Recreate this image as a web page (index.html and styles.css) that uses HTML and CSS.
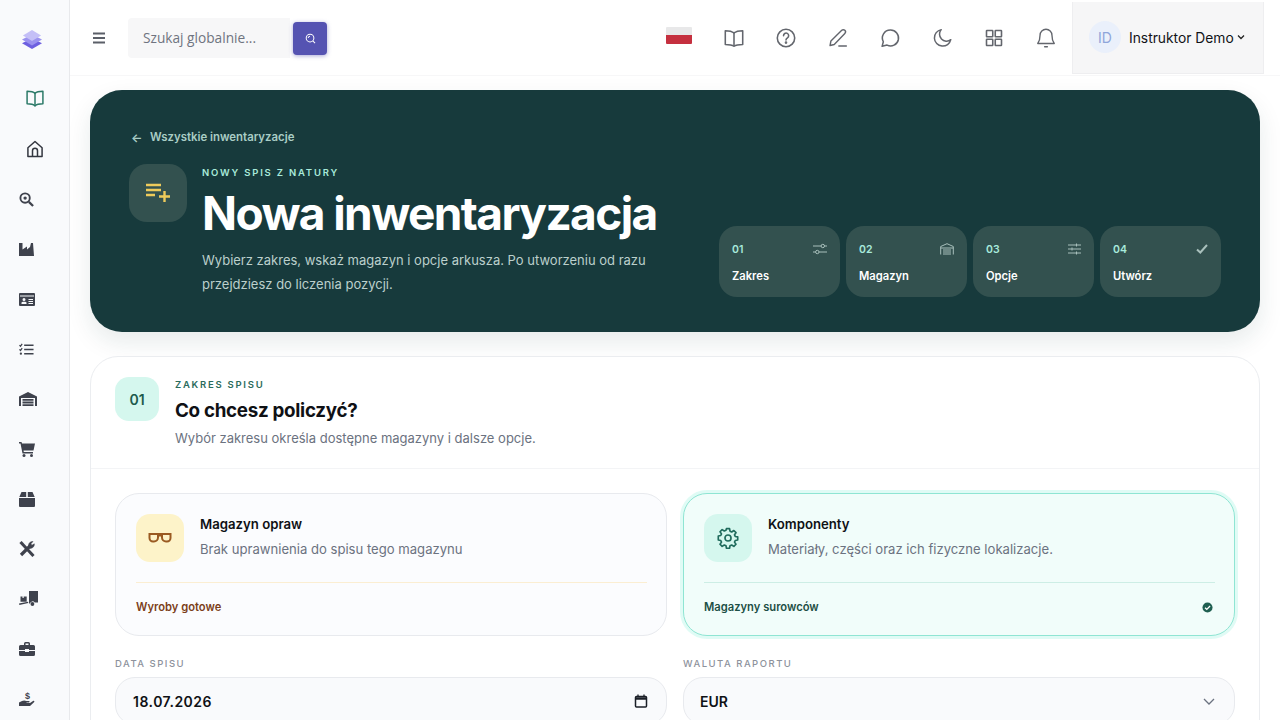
FILE: index.html
```html
<!DOCTYPE html>
<html lang="pl">
<head>
    <meta charset="UTF-8">
    <meta name="viewport" content="width=device-width, initial-scale=1.0">
    <title>Nowa inwentaryzacja</title>
    <link rel="stylesheet" href="styles.css">
</head>
<body>

<div class="app">
    <!-- Sidebar -->
    <aside class="sidebar">
        <div class="logo">
            <svg width="22" height="20" viewBox="0 0 24 22">
                <path d="M12 9 L23 14.5 L12 21 L1 14.5 Z" fill="#6d5fe0"/>
                <path d="M12 5 L23 10.5 L12 17 L1 10.5 Z" fill="#9b92ef"/>
                <path d="M12 0 L22 6 L12 12 L2 6 Z" fill="#c4bff7"/>
            </svg>
        </div>
        <div class="side-item line active">
            <svg width="20" height="20" viewBox="0 0 24 24" fill="none" stroke="currentColor" stroke-width="1.8" stroke-linejoin="round"><path d="M12 6.5C10 4.5 6 4 2.5 4v15c3.5 0 7.500.5 9.500 2.500 2-2 6-2.500 9.500-2.500V4C18 4 14 4.500 12 6.500z"/><path d="M12 6.500v15"/></svg>
        </div>
        <div class="side-item line">
            <svg width="20" height="20" viewBox="0 0 24 24" fill="none" stroke="currentColor" stroke-width="1.8" stroke-linejoin="round"><path d="M3.500 10.500 12 3l8.500 7.500V21h-17z"/><path d="M9 21v-7a3 3 0 0 1 6 0v7"/></svg>
        </div>
        <div class="side-item">
            <svg width="15" height="15" viewBox="0 0 16 16" fill="none" stroke="currentColor"><circle cx="6.500" cy="6.500" r="5" stroke-width="2"/><circle cx="6.500" cy="6.500" r="1.800" fill="currentColor" stroke="none"/><path d="M10.500 10.500 15 15" stroke-width="2.400"/></svg>
        </div>
        <div class="side-item">
            <svg width="15" height="13" viewBox="0 0 15 13" fill="currentColor"><path d="M0 0h3.500v6.500L8 3.500v3l3-2.500 1-4h2l1 13H0z"/></svg>
        </div>
        <div class="side-item">
            <svg width="16" height="13" viewBox="0 0 16 13" fill="currentColor"><path fill-rule="evenodd" d="M1 0h14a1 1 0 0 1 1 1v11a1 1 0 0 1-1 1H1a1 1 0 0 1-1-1V1a1 1 0 0 1 1-1zM1 2.500v1h14v-1zM5 5a1.500 1.500 0 1 0 0 3 1.500 1.500 0 0 0 0-3zM2.500 11h5V9.800C7.500 9 6.500 8.700 5 8.700s-2.500.3-2.500 1.100zM9.500 6v1H14V6zm0 2v1H14V8zm0 2v1H14v-1z"/></svg>
        </div>
        <div class="side-item">
            <svg width="15" height="13" viewBox="0 0 16 13" fill="none" stroke="currentColor" stroke-width="1.300"><path d="M.5 1.800 1.600 3 3.400.6M.5 6.300 1.600 7.500 3.400 5.100"/><path d="M5.500 2h10M5.500 6.500h10M5.500 11h10" stroke-width="1.500"/><circle cx="2" cy="11" r="1.200" fill="currentColor" stroke="none"/></svg>
        </div>
        <div class="side-item">
            <svg width="18" height="14" viewBox="0 0 18 14" fill="currentColor"><path fill-rule="evenodd" d="M0 4.500 9 0l9 4.500V14h-2V6H2v8H0zM3.500 7h11v1.800h-11zm0 2.600h11v1.800h-11zm0 2.600h11V14h-11z"/></svg>
        </div>
        <div class="side-item">
            <svg width="16" height="15" viewBox="0 0 16 15" fill="currentColor"><path d="M0 0h2.500l.5 1.500H16l-1.500 7H4.500l.3 1.500H14v1.500H3.500L1.500 1.500H0z"/><circle cx="5" cy="13.500" r="1.500"/><circle cx="12.500" cy="13.500" r="1.500"/></svg>
        </div>
        <div class="side-item">
            <svg width="16" height="15" viewBox="0 0 16 15" fill="currentColor"><path d="M2.500 0h4.700v5H0.300zM8.800 0h4.700l2.200 5H8.800zM0 6h16v8a1 1 0 0 1-1 1H1a1 1 0 0 1-1-1z"/></svg>
        </div>
        <div class="side-item">
            <svg width="16" height="16" viewBox="0 0 16 16" fill="none" stroke="currentColor"><path d="M1.500 1 14.500 15" stroke-width="3"/><path d="M2 14 11 5" stroke-width="3.200"/><path d="M9.500 4.500A4 4 0 0 1 14 .5l-2 2.200.8 1.600 2.500-1.500a4 4 0 0 1-4.800 4.500z" fill="currentColor" stroke="currentColor" stroke-width=".5"/></svg>
        </div>
        <div class="side-item">
            <svg width="19" height="16" viewBox="0 0 19 16" fill="currentColor"><path d="M10 0h9v11.500h-3.300a2.600 2.600 0 0 0-4.700 1L10 12.500z"/><path d="M1.500 5.500h2v1.500h1.200V5.500h3v5.200h-6.200z"/><path d="M0 12.500 9 10.700l.3 1.400L.4 14z"/><circle cx="13.400" cy="13" r="1.900"/></svg>
        </div>
        <div class="side-item">
            <svg width="16" height="14" viewBox="0 0 16 14" fill="currentColor"><path fill-rule="evenodd" d="M5 3V1.500A1.500 1.500 0 0 1 6.500 0h3A1.500 1.500 0 0 1 11 1.500V3h3.500A1.500 1.500 0 0 1 16 4.500V8H10V7H6v1H0V4.500A1.500 1.500 0 0 1 1.500 3zM6.500 1.500V3h3V1.500zM0 9h6v1h4V9h6v3.500a1.500 1.500 0 0 1-1.500 1.500h-13A1.500 1.500 0 0 1 0 12.500z"/></svg>
        </div>
        <div class="side-item">
            <svg width="16" height="16" viewBox="0 0 16 16" fill="currentColor"><path d="M0 11.500 3 10c1.500-.8 3-.6 4.500 0H10c.8 0 .8 1.500 0 1.500H7.500v.5H11l3-2c1-.6 2 .5 1 1.300L11 15H0z"/><text x="6" y="8" font-size="9" font-family="Liberation Sans" font-weight="700">$</text></svg>
        </div>
    </aside>

    <div class="content">
        <!-- Top bar -->
        <header class="topbar">
            <button class="menu-btn" aria-label="Menu">
                <svg width="14" height="12" viewBox="0 0 14 12" fill="none" stroke="#5b5f68" stroke-width="1.800"><path d="M1 1.500h12M1 6h12M1 10.500h12"/></svg>
            </button>
            <div class="search">
                <span class="search-text">Szukaj globalnie...</span>
                <button class="search-btn" aria-label="Szukaj">
                    <svg width="11" height="11" viewBox="0 0 12 12" fill="none" stroke="#fff" stroke-width="1.100"><circle cx="5.500" cy="5.500" r="4.200"/><path d="M3.500 5.500a2 2 0 0 1 2-2M8.500 8.500 11 11"/></svg>
                </button>
            </div>
            <div class="top-icons">
                <div class="flag"></div>
                <div class="top-icon">
                    <svg width="22" height="22" viewBox="0 0 24 24" fill="none" stroke="currentColor" stroke-width="1.700" stroke-linejoin="round"><path d="M12 6.500C10 4.800 6.500 4 2.500 4v15c4 0 7.500.5 9.500 2 2-1.500 5.500-2 9.500-2V4c-4 0-7.500.8-9.500 2.500z"/><path d="M12 6.500V21"/></svg>
                </div>
                <div class="top-icon">
                    <svg width="22" height="22" viewBox="0 0 24 24" fill="none" stroke="currentColor" stroke-width="1.700" stroke-linecap="round"><circle cx="12" cy="12" r="9.500"/><path d="M9.300 9.500a2.800 2.800 0 1 1 4.300 2.300c-1 .7-1.600 1.200-1.600 2.400"/><circle cx="12" cy="17" r=".6" fill="currentColor"/></svg>
                </div>
                <div class="top-icon">
                    <svg width="20" height="20" viewBox="0 0 24 24" fill="none" stroke="currentColor" stroke-width="1.700" stroke-linecap="round" stroke-linejoin="round"><path d="M2.500 21l1-5.500L16.500 2.800a2.600 2.600 0 0 1 3.700 3.700L7.500 19.800z"/><path d="M13 21.500h9"/></svg>
                </div>
                <div class="top-icon">
                    <svg width="20" height="20" viewBox="0 0 24 24" fill="none" stroke="currentColor" stroke-width="1.800" stroke-linejoin="round"><path d="M12.500 2.500a9.500 9.500 0 1 1-4 18L2.500 22l1.500-5.500a9.500 9.500 0 0 1 8.500-14z"/></svg>
                </div>
                <div class="top-icon">
                    <svg width="21" height="21" viewBox="0 0 24 24" fill="none" stroke="currentColor" stroke-width="1.700" stroke-linejoin="round"><path d="M10.500 3a9.500 9.500 0 1 0 11 11.500A8 8 0 0 1 10.500 3z"/></svg>
                </div>
                <div class="top-icon">
                    <svg width="20" height="20" viewBox="0 0 24 24" fill="none" stroke="currentColor" stroke-width="1.900"><rect x="3" y="3" width="7.500" height="7.500" rx=".5"/><rect x="13.500" y="3" width="7.500" height="7.500" rx=".5"/><rect x="3" y="13.500" width="7.500" height="7.500" rx=".5"/><rect x="13.500" y="13.500" width="7.500" height="7.500" rx=".5"/></svg>
                </div>
                <div class="top-icon">
                    <svg width="22" height="22" viewBox="0 0 24 24" fill="none" stroke="currentColor" stroke-width="1.500" stroke-linecap="round" stroke-linejoin="round"><path d="M12 2.500a6.500 6.500 0 0 0-6.500 6.500c0 5-1 7-2.500 9h18c-1.500-2-2.500-4-2.500-9A6.500 6.500 0 0 0 12 2.500z"/><path d="M10.500 21.500h3"/></svg>
                </div>
            </div>
            <div class="user-box">
                <div class="avatar">ID</div>
                <span class="user-name">Instruktor Demo</span>
                <svg class="user-caret" width="8" height="6" viewBox="0 0 8 6" fill="none" stroke="#222" stroke-width="1.300"><path d="M1 1.500 4 4.500 7 1.500"/></svg>
            </div>
        </header>

        <main class="main">
            <!-- Hero -->
            <section class="hero">
                <div class="hero-left">
                    <a class="back-link"><span class="back-arrow">←</span>Wszystkie inwentaryzacje</a>
                    <div class="hero-title-row">
                        <div class="hero-icon">
                            <svg width="26" height="20" viewBox="0 0 26 20" fill="none" stroke="#eecb5b" stroke-width="2.400"><path d="M1 2h15M1 7h15M1 12h9M14 13.500h11M19.500 8v11"/></svg>
                        </div>
                        <div class="hero-text">
                            <div class="eyebrow">NOWY SPIS Z NATURY</div>
                            <h1>Nowa inwentaryzacja</h1>
                            <p>Wybierz zakres, wskaż magazyn i opcje arkusza. Po utworzeniu od razu przejdziesz do liczenia pozycji.</p>
                        </div>
                    </div>
                </div>
                <div class="steps">
                    <div class="step">
                        <div class="step-top"><span class="step-num">01</span>
                            <svg width="14" height="12" viewBox="0 0 14 12" fill="none" stroke="#a9c0bc" stroke-width="1"><path d="M0 3h8M11.500 3H14M0 9h2.500M6 9h8"/><circle cx="9.800" cy="3" r="1.700"/><circle cx="4.300" cy="9" r="1.700"/></svg>
                        </div>
                        <div class="step-name">Zakres</div>
                    </div>
                    <div class="step">
                        <div class="step-top"><span class="step-num">02</span>
                            <svg width="14" height="12" viewBox="0 0 14 12" fill="none" stroke="#a9c0bc" stroke-width="1"><path d="M.7 11.500V3.500L7 .7l6.300 2.800v8M.7 5h12.600M3 7h8M3 9h8M3 11h8" /></svg>
                        </div>
                        <div class="step-name">Magazyn</div>
                    </div>
                    <div class="step">
                        <div class="step-top"><span class="step-num">03</span>
                            <svg width="13" height="12" viewBox="0 0 13 12" fill="none" stroke="#a9c0bc" stroke-width="1"><path d="M0 2h13M0 6h13M0 10h13"/><path d="M8.500.5v3M4 4.500v3M8.500 8.500v3"/></svg>
                        </div>
                        <div class="step-name">Opcje</div>
                    </div>
                    <div class="step">
                        <div class="step-top"><span class="step-num">04</span>
                            <svg width="12" height="10" viewBox="0 0 12 10" fill="none" stroke="#a9c0bc" stroke-width="2"><path d="M1 5.500 4.300 8.500 11 1"/></svg>
                        </div>
                        <div class="step-name">Utwórz</div>
                    </div>
                </div>
            </section>

            <!-- Scope card -->
            <section class="card">
                <div class="card-head">
                    <div class="card-num">01</div>
                    <div>
                        <div class="card-eyebrow">ZAKRES SPISU</div>
                        <h2>Co chcesz policzyć?</h2>
                        <p>Wybór zakresu określa dostępne magazyny i dalsze opcje.</p>
                    </div>
                </div>
                <div class="card-body">
                    <div class="option">
                        <div class="option-top">
                            <div class="option-icon amber">
                                <svg width="24" height="12" viewBox="0 0 24 12" fill="none" stroke="#9a5a22" stroke-width="2"><path d="M1 2h22M1.500 2h8.500v3.500a4 4 0 0 1-4 4H5a3.500 3.500 0 0 1-3.500-3.500zM14 2h8.500v4A3.500 3.500 0 0 1 19 9.500h-1a4 4 0 0 1-4-4zM10 3.500h4"/></svg>
                            </div>
                            <div>
                                <h3>Magazyn opraw</h3>
                                <p>Brak uprawnienia do spisu tego magazynu</p>
                            </div>
                        </div>
                        <div class="option-foot amber-foot"><span>Wyroby gotowe</span></div>
                    </div>
                    <div class="option selected">
                        <div class="option-top">
                            <div class="option-icon mint">
                                <svg width="22" height="22" viewBox="0 0 24 24" fill="none" stroke="#1f6b5c" stroke-width="1.800" stroke-linejoin="round"><path d="M10.300 2.500h3.400l.5 2.800 1.800.8 2.400-1.600 2.300 2.400-1.600 2.300.8 1.800 2.700.5v3.400l-2.700.5-.8 1.800 1.600 2.300-2.300 2.400-2.400-1.600-1.800.8-.5 2.800h-3.400l-.5-2.800-1.800-.8-2.400 1.600-2.300-2.400 1.600-2.300-.8-1.800-2.700-.5V10.500l2.700-.5.8-1.800L3.300 5.900l2.300-2.400 2.400 1.600 1.800-.8z" transform="translate(0 -.7)"/><circle cx="12" cy="12" r="3.300"/></svg>
                            </div>
                            <div>
                                <h3>Komponenty</h3>
                                <p>Materiały, części oraz ich fizyczne lokalizacje.</p>
                            </div>
                        </div>
                        <div class="option-foot mint-foot"><span>Magazyny surowców</span>
                            <svg width="11" height="11" viewBox="0 0 12 12"><circle cx="6" cy="6" r="5.500" fill="#1f5f50"/><path d="M3.300 6.200 5.200 8 8.800 4.300" fill="none" stroke="#fff" stroke-width="1.400"/></svg>
                        </div>
                    </div>
                    <div class="field">
                        <label>DATA SPISU</label>
                        <div class="field-box date-box">
                            <span>18.07.2026</span>
                            <svg width="14" height="14" viewBox="0 0 14 14" fill="none" stroke="#1b1f27" stroke-width="1.500"><rect x="1.500" y="2.500" width="11" height="10.500" rx="1"/><path d="M1.500 4.500h11" stroke-width="2.500"/><path d="M4 .5v2M10 .5v2" stroke-width="1.300"/></svg>
                        </div>
                    </div>
                    <div class="field">
                        <label>WALUTA RAPORTU</label>
                        <div class="field-box">
                            <span>EUR</span>
                            <svg width="12" height="7" viewBox="0 0 12 7" fill="none" stroke="#6b7280" stroke-width="1.300"><path d="M1 1l5 5 5-5"/></svg>
                        </div>
                    </div>
                </div>
            </section>
        </main>
    </div>
</div>

</body>
</html>
```

FILE: styles.css
```css
* {
    box-sizing: border-box;
}

html, body {
    height: 720px;
    overflow: hidden;
}

body {
    margin: 0;
    font-family: "Inter", "Liberation Sans", sans-serif;
    background-color: #ffffff;
    color: #0f1115;
}

h1, h2, h3, p {
    margin: 0;
}

.app {
    display: flex;
    height: 720px;
}

/* Sidebar */
.sidebar {
    width: 70px;
    flex-shrink: 0;
    background-color: #f9fafc;
    border-right: 1px solid #e8e9ec;
    padding-top: 30px;
}

.logo {
    height: 43px;
    padding-left: 21px;
}

.side-item {
    height: 50px;
    display: flex;
    align-items: center;
    padding-left: 19px;
    color: #3f424d;
}

.side-item.line {
    padding-left: 25px;
    color: #33363f;
}

.side-item.active {
    color: #2c7a68;
    margin-bottom: 1px;
}

/* Top bar */
.content {
    flex: 1;
    min-width: 0;
}

.topbar {
    height: 76px;
    display: flex;
    align-items: center;
    padding-left: 22px;
    border-bottom: 1px solid #f7f7f8;
}

.menu-btn {
    background: none;
    border: none;
    padding: 0;
    width: 14px;
    height: 12px;
    display: flex;
}

.search {
    display: flex;
    align-items: center;
    margin-left: 22px;
    width: 199px;
    height: 40px;
}

.search-text {
    width: 162px;
    height: 40px;
    line-height: 40px;
    padding-left: 15px;
    background-color: #f7f7f8;
    border-radius: 4px 0 0 4px;
    color: #6f7480;
    font-family: "Open Sans", sans-serif;
    font-size: 13.700px;
}

.search-btn {
    margin-left: 3px;
    margin-top: 1px;
    width: 34px;
    height: 33px;
    background-color: #5553b2;
    border: none;
    border-radius: 4px;
    padding: 0;
    display: flex;
    align-items: center;
    justify-content: center;
    box-shadow: 0 1px 4px rgba(85, 83, 178, 0.5);
}

.top-icons {
    margin-left: auto;
    display: flex;
    align-items: center;
}

.flag {
    width: 26px;
    height: 17px;
    margin-right: 16px;
    margin-bottom: 4px;
    background: linear-gradient(#e8e8e9 50%, #c5303f 50%);
    border-radius: 1px;
}

.top-icon {
    width: 52px;
    height: 40px;
    display: flex;
    align-items: center;
    justify-content: center;
    color: #63666d;
}

.user-box {
    width: 192px;
    height: 72px;
    margin: 0 16px 0 0;
    display: flex;
    align-items: center;
    padding-left: 16px;
    background-color: #f6f6f7;
    border: 1px solid #eeeef0;
    border-top: none;
}

.avatar {
    width: 32px;
    height: 32px;
    border-radius: 50%;
    background-color: #eaf0fb;
    color: #8fa6da;
    font-size: 14px;
    display: flex;
    align-items: center;
    justify-content: center;
}

.user-name {
    margin-left: 8px;
    margin-top: 2px;
    font-size: 13.800px;
    font-weight: 400;
    color: #111318;
    white-space: nowrap;
}

.user-caret {
    margin-left: 3px;
}

/* Main area */
.main {
    padding: 14px 20px 0;
}

.hero {
    height: 242px;
    background-color: #173a3c;
    border-radius: 32px;
    padding: 39px 39px 35px 39px;
    display: flex;
    justify-content: space-between;
    align-items: flex-end;
    color: #ffffff;
    box-shadow: 0 10px 24px rgba(23, 58, 60, 0.10);
}

.hero-left {
    align-self: flex-start;
    width: 560px;
}

.back-link {
    display: flex;
    align-items: center;
    font-size: 11.400px;
    font-weight: 600;
    color: #a9cdc5;
    height: 16px;
}

.back-arrow {
    width: 21px;
    padding-left: 2px;
    font-size: 12px;
}

.hero-title-row {
    display: flex;
    gap: 15px;
    margin-top: 19px;
}

.hero-icon {
    width: 58px;
    height: 58px;
    flex-shrink: 0;
    border-radius: 18px;
    background-color: #33514f;
    display: flex;
    align-items: center;
    justify-content: center;
}

.eyebrow {
    font-size: 9.500px;
    font-weight: 600;
    letter-spacing: 1.800px;
    color: #a8eadb;
    margin-top: 3px;
}

.hero-text h1 {
    font-size: 46px;
    line-height: 56px;
    font-weight: 700;
    letter-spacing: -1.600px;
    margin-top: 7px;
    white-space: nowrap;
}

.hero-text p {
    font-size: 13px;
    line-height: 24px;
    color: #bcd0cc;
    margin-top: 7px;
    width: 460px;
}

.steps {
    display: flex;
    gap: 6px;
}

.step {
    width: 121px;
    height: 71px;
    border-radius: 18px;
    background-color: #33514f;
    padding: 16px 13px;
}

.step-top {
    display: flex;
    justify-content: space-between;
    align-items: center;
    height: 14px;
}

.step-num {
    font-size: 10.500px;
    font-weight: 600;
    color: #a8eadb;
}

.step-name {
    margin-top: 13px;
    font-size: 11.200px;
    font-weight: 600;
    color: #ffffff;
}

/* Scope card */
.card {
    margin-top: 24px;
    background-color: #ffffff;
    border: 1px solid #ebedf0;
    border-radius: 28px;
}

.card-head {
    height: 112px;
    display: flex;
    gap: 16px;
    padding: 20px 24px 0;
    border-bottom: 1px solid #f3f4f6;
}

.card-num {
    width: 44px;
    height: 44px;
    flex-shrink: 0;
    border-radius: 14px;
    background-color: #d5f7ee;
    color: #1d5a4c;
    font-size: 14px;
    font-weight: 600;
    display: flex;
    align-items: center;
    justify-content: center;
}

.card-eyebrow {
    font-size: 9.500px;
    font-weight: 600;
    letter-spacing: 1.750px;
    color: #2b6b5c;
    line-height: 14px;
    margin-top: 1px;
}

.card-head h2 {
    font-size: 18.800px;
    line-height: 28px;
    font-weight: 700;
    letter-spacing: -0.300px;
    margin-top: 5px;
}

.card-head p {
    font-size: 13px;
    line-height: 20px;
    color: #6b7280;
    margin-top: 3px;
}

.card-body {
    display: grid;
    grid-template-columns: 552px 552px;
    column-gap: 16px;
    row-gap: 21px;
    padding: 24px 24px 24px;
}

.option {
    height: 143px;
    background-color: #fbfcfe;
    border: 1px solid #e8eaee;
    border-radius: 24px;
    padding: 20px 20px 0;
}

.option.selected {
    background-color: #f1fdfa;
    border-color: #8fe5d3;
    box-shadow: 0 0 0 3px rgba(167, 243, 225, 0.35);
}

.option-top {
    display: flex;
    gap: 16px;
    height: 68px;
}

.option-icon {
    width: 48px;
    height: 48px;
    flex-shrink: 0;
    border-radius: 14px;
    display: flex;
    align-items: center;
    justify-content: center;
}

.option-icon.amber {
    background-color: #fdf3c9;
}

.option-icon.mint {
    background-color: #d5f7ee;
}

.option h3 {
    font-size: 13.200px;
    line-height: 20px;
    font-weight: 600;
}

.option p {
    font-size: 13.100px;
    line-height: 20px;
    color: #6b7280;
    margin-top: 5px;
}

.option-foot {
    margin-right: -1px;
    height: 49px;
    display: flex;
    align-items: center;
    justify-content: space-between;
    padding-right: 2px;
    font-size: 11.200px;
    font-weight: 600;
}

.amber-foot {
    border-top: 1px solid #fbeed2;
    color: #7b3f1a;
}

.mint-foot {
    border-top: 1px solid #cdeee5;
    color: #1d4f45;
}

.field label {
    display: block;
    font-size: 9.500px;
    font-weight: 500;
    letter-spacing: 1.500px;
    color: #8d929c;
    line-height: 14px;
    margin-bottom: 6px;
}

.field-box {
    height: 48px;
    background-color: #f9fafc;
    border: 1px solid #e8eaee;
    border-radius: 20px;
    display: flex;
    align-items: center;
    justify-content: space-between;
    padding: 0 19px 0 16px;
    font-size: 14px;
    font-weight: 600;
}

.date-box {
    padding-left: 17px;
    padding-right: 18px;
    letter-spacing: 0.500px;
}
```
